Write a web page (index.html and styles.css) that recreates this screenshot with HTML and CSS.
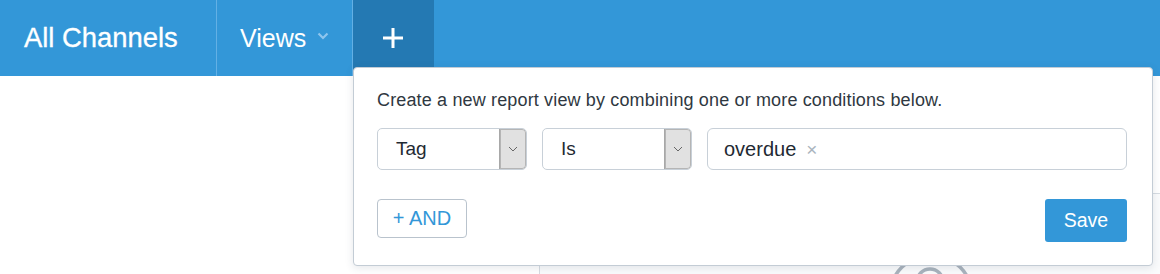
FILE: index.html
```html
<!DOCTYPE html>
<html lang="en">
<head>
<meta charset="utf-8">
<title>All Channels</title>
<link rel="stylesheet" href="styles.css">
</head>
<body>
<div class="app">
  <header class="navbar">
    <div class="nav-item brand">All Channels</div>
    <div class="nav-item views">Views
      <svg class="chev" width="12" height="8" viewBox="0 0 12 8"><path d="M1.5 1.5 L6 6 L10.5 1.5" fill="none" stroke="#8ec5ee" stroke-width="2.2"/></svg>
    </div>
    <div class="nav-item add">
      <svg width="24" height="24" viewBox="0 0 24 24"><path d="M12 2 V22 M2 12 H22" stroke="#fff" stroke-width="3"/></svg>
    </div>
  </header>
  <main class="content">
    <aside class="sidebar"></aside>
    <section class="panel">
      <div class="panel-head"></div>
      <div class="panel-body">
        <svg class="empty-icon" width="100" height="100" viewBox="0 0 100 100">
          <circle cx="50" cy="50" r="41" fill="none" stroke="#a9b3bd" stroke-width="3.5"/>
          <circle cx="49" cy="36" r="13" fill="none" stroke="#a9b3bd" stroke-width="3.5"/>
        </svg>
      </div>
    </section>
  </main>
  <div class="popover">
    <p class="hint">Create a new report view by combining one or more conditions below.</p>
    <div class="cond-row">
      <div class="select">
        <span class="select-value">Tag</span>
        <span class="select-arrow"><svg width="10" height="6" viewBox="0 0 10 6"><path d="M1 1 L5 5 L9 1" fill="none" stroke="#666" stroke-width="1"/></svg></span>
      </div>
      <div class="select">
        <span class="select-value">Is</span>
        <span class="select-arrow"><svg width="10" height="6" viewBox="0 0 10 6"><path d="M1 1 L5 5 L9 1" fill="none" stroke="#666" stroke-width="1"/></svg></span>
      </div>
      <div class="tag-input">
        <span class="tag">overdue</span>
        <span class="tag-remove">×</span>
      </div>
    </div>
    <div class="actions">
      <button class="btn-and">+ AND</button>
      <button class="btn-save">Save</button>
    </div>
  </div>
</div>
</body>
</html>
```

FILE: styles.css
```css
* { box-sizing: border-box; }
html, body { margin: 0; padding: 0; }
body {
  font-family: "Liberation Sans", Arial, sans-serif;
  background: #fff;
  width: 1160px;
  height: 274px;
  overflow: hidden;
}
.app { position: relative; width: 1160px; height: 274px; }

.navbar {
  display: flex;
  height: 76px;
  background: #3397d8;
  color: #fff;
}
.nav-item {
  display: flex;
  align-items: center;
  height: 100%;
}
.brand {
  width: 217px;
  padding-left: 24px;
  font-size: 27.4px;
  -webkit-text-stroke: 0.3px #fff;
  border-right: 1px solid #63b0e5;
}
.views {
  width: 136px;
  padding-left: 23px;
  font-size: 25px;
  border-right: 1px solid #63b0e5;
}
.views .chev { margin-left: 11px; margin-top: -4px; }
.add {
  width: 81px;
  justify-content: center;
  background: #2479b3;
  padding-right: 1px;
}

.content {
  display: flex;
  height: 198px;
}
.sidebar {
  width: 540px;
  border-right: 1px solid #d6dce2;
}
.panel {
  flex: 1;
  display: flex;
  flex-direction: column;
  min-height: 0;
}
.panel-head {
  flex: 0 0 118px;
  border-bottom: 1px solid #d6dce2;
}
.panel-body {
  flex: 1 1 auto;
  min-height: 0;
  overflow: hidden;
  background: #fafbfc;
  padding: 52px 0 0 341px;
}
.empty-icon { display: block; }

.popover {
  position: absolute;
  left: 353px;
  top: 67px;
  width: 800px;
  height: 199px;
  background: #fff;
  border: 1px solid #c3ccd5;
  border-radius: 4px;
  box-shadow: 0 2px 8px rgba(40, 60, 80, 0.12);
  padding: 20px 25px 0 23px;
  z-index: 5;
  color: #2f3841;
}
.hint {
  margin: 0;
  font-size: 18px;
  letter-spacing: 0.15px;
  line-height: 24px;
}
.cond-row {
  display: flex;
  gap: 15px;
  margin-top: 16px;
  height: 42px;
}
.select {
  width: 150px;
  display: flex;
  border: 1px solid #c8d0d8;
  border-radius: 5px;
  overflow: hidden;
}
.select-value {
  flex: 1;
  display: flex;
  align-items: center;
  padding-left: 18px;
  font-size: 19px;
  color: #1f2a33;
}
.select-arrow {
  width: 27px;
  display: flex;
  align-items: center;
  justify-content: center;
  background: #e1e1e1;
  border-left: 1px solid #a8a8a8;
  border-radius: 0 4px 4px 0;
  box-shadow: inset 0 0 0 1px #b5b5b5;
}
.tag-input {
  flex: 1;
  display: flex;
  align-items: center;
  border: 1px solid #c8d0d8;
  border-radius: 6px;
  padding-left: 16px;
}
.tag {
  font-size: 20px;
  color: #1f2a33;
}
.tag-remove {
  margin-left: 10px;
  font-size: 19px;
  color: #aab4be;
  margin-top: 1px;
}

.actions {
  display: flex;
  justify-content: space-between;
  align-items: flex-start;
  margin-top: 29px;
}
button {
  font-family: "Liberation Sans", Arial, sans-serif;
  cursor: pointer;
}
.btn-and {
  width: 90px;
  height: 39px;
  background: #fff;
  border: 1px solid #b9c3cd;
  border-radius: 4px;
  color: #3397d8;
  font-size: 20px;
  padding: 0;
}
.btn-save {
  width: 82px;
  height: 43px;
  background: #3397d8;
  border: none;
  border-radius: 3px;
  color: #fff;
  font-size: 19.5px;
  padding: 0;
}
```
